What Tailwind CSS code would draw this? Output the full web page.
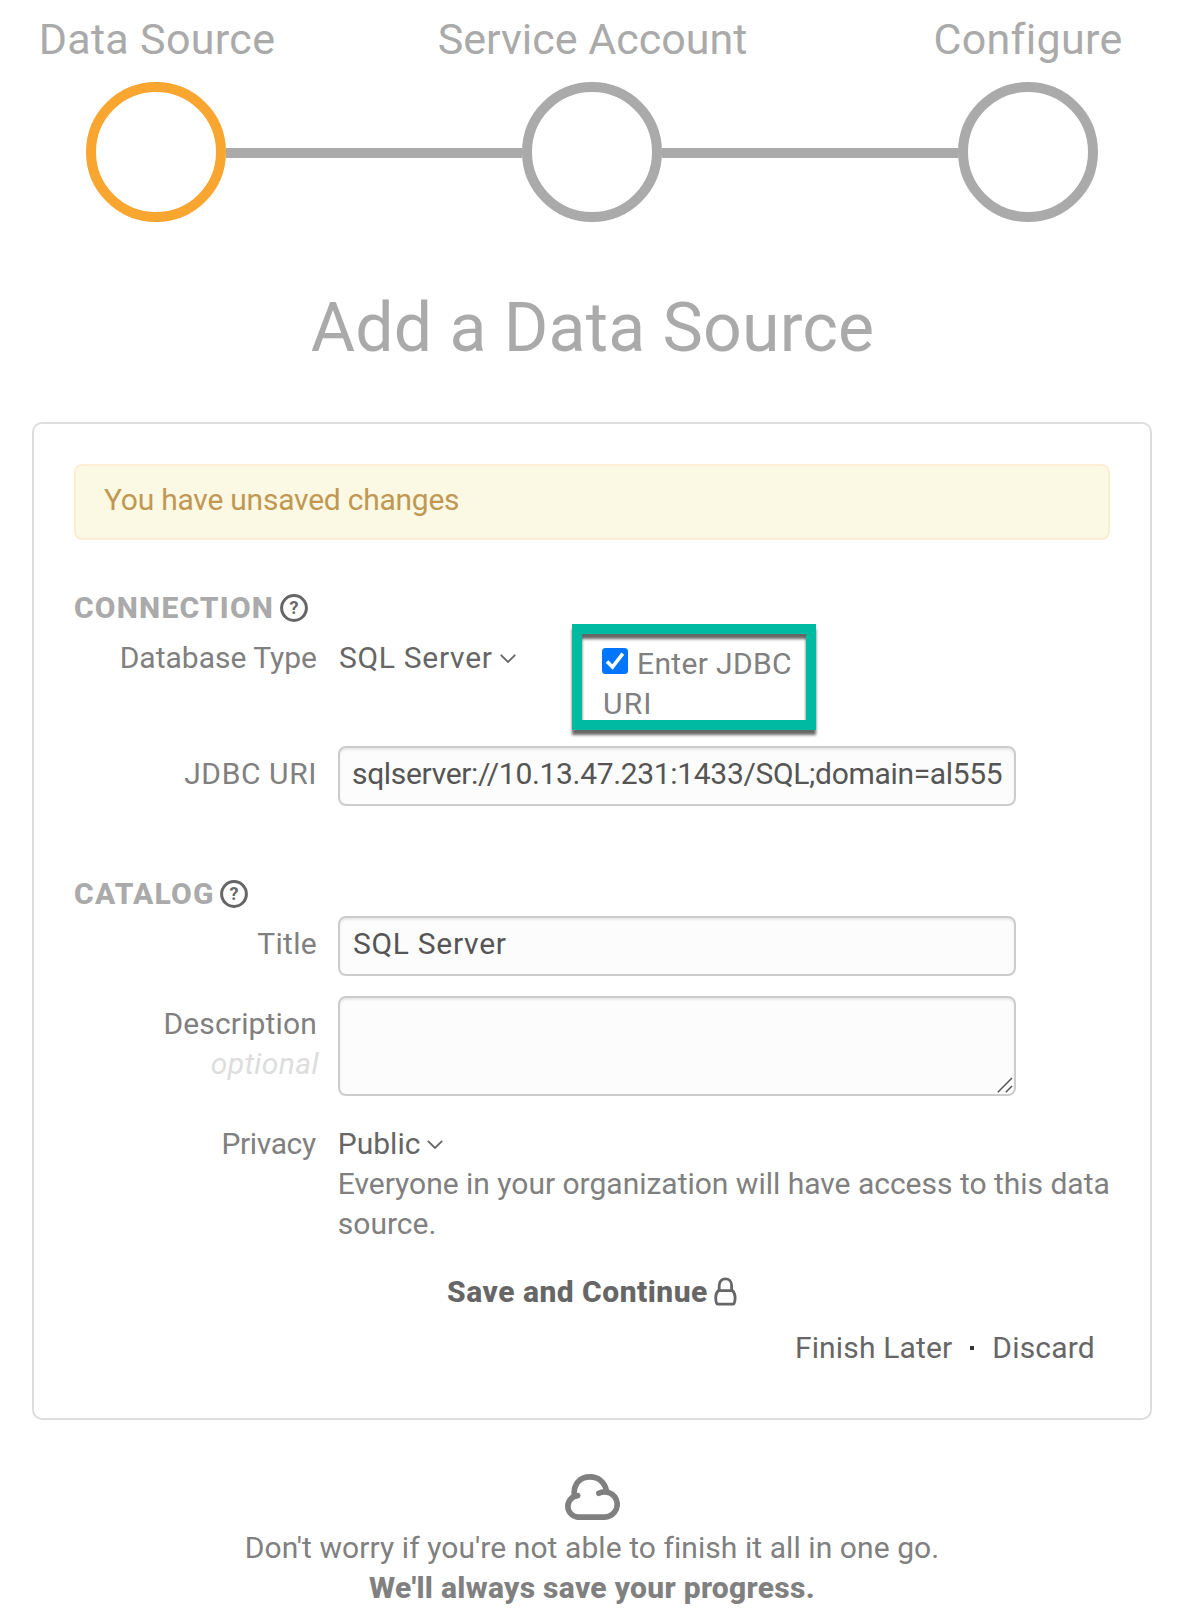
<!DOCTYPE html>
<html lang="en">
<head>
<meta charset="utf-8">
<title>Add a Data Source</title>
<script src="https://cdn.jsdelivr.net/npm/@tailwindcss/browser@4"></script>
</head>
<body class="bg-white font-['Roboto',sans-serif] text-[30px] leading-[40px] text-[#808080]">
<div class="flex h-[1616px] w-[1178px] flex-col overflow-hidden">

  <!-- Wizard steps -->
  <header class="flex flex-col pt-[9px] text-[#aaa]">
    <div class="flex justify-between pl-[7px] text-[43px] leading-[60px] whitespace-nowrap">
      <div class="flex w-[300px] justify-center tracking-[0.34px]">Data Source</div>
      <div class="flex w-[300px] justify-center">Service Account</div>
      <div class="flex w-[300px] justify-center tracking-[0.3px]">Configure</div>
    </div>
    <div class="mt-[13px] flex items-center pr-[80px] pl-[86px]">
      <div class="size-[140px] rounded-full border-[10px] border-[#f9a630]"></div>
      <div class="mt-[2px] h-[10px] flex-1 bg-[#aaa]"></div>
      <div class="size-[140px] rounded-full border-[10px] border-[#aaa]"></div>
      <div class="mt-[2px] h-[10px] flex-1 bg-[#aaa]"></div>
      <div class="size-[140px] rounded-full border-[10px] border-[#aaa]"></div>
    </div>
  </header>

  <h1 class="mt-[56px] pl-[7px] text-center text-[68px] leading-[100px] tracking-[0.2px] text-[#aaa]">Add a Data Source</h1>

  <main class="mt-[44px] mr-[26px] ml-[32px] flex flex-col rounded-[10px] border-2 border-[#ddd] px-[40px] pt-[40px] pb-[50px]">
    <div class="h-[76px] rounded-[8px] border-2 border-[#fbeed5] bg-[#fbf8e3] pt-[14px] pl-[28px] tracking-[-0.24px] text-[#c09853]">You have unsaved changes</div>

    <h2 class="mt-[48px] flex items-center gap-[6px] font-extrabold text-[#aaa]">
      <span class="tracking-[1.2px]">CONNECTION</span>
      <svg class="mt-[-1px] size-[28px]" viewBox="0 0 28 28"><circle cx="14" cy="14" r="12.4" fill="none" stroke="#666" stroke-width="3"/><text x="14" y="20.3" text-anchor="middle" font-size="18" font-weight="700" fill="#666">?</text></svg>
    </h2>

    <div class="relative mt-[10px] flex h-[98px]">
      <label class="w-[243px] text-right">Database Type</label>
      <div class="ml-[21px] flex w-[264px] items-start gap-[7px] pl-px text-[#666]">
        <span class="tracking-[0.7px]">SQL Server</span>
        <svg class="mt-[16px] h-[9px] w-[16px]" viewBox="0 0 16 9" fill="none" stroke="#666" stroke-width="1.8"><path d="M.8 .8 8 8 15.2 .8"/></svg>
      </div>
      <div class="w-[210px] pt-[6px]">
        <div class="flex items-start gap-[9px] whitespace-nowrap">
          <svg class="mt-[4px] size-[26px] shrink-0" viewBox="0 0 26 26"><rect width="26" height="26" rx="3.5" fill="#0075ff"/><path d="M5 13.5 10.5 19 20.8 5.6" fill="none" stroke="#fff" stroke-width="3.6"/></svg>
          <span class="tracking-[0.35px]">Enter JDBC</span>
        </div>
        <div class="pl-px tracking-[1.2px]">URI</div>
      </div>
      <div class="absolute top-[-14px] left-[498px] h-[106px] w-[244px] border-[10px] border-[#00bba1] drop-shadow-[0_5px_1.5px_rgba(0,0,0,0.6)]"></div>
    </div>

    <div class="mt-[10px] flex">
      <label class="w-[243px] pt-[8px] text-right tracking-[0.6px]">JDBC URI</label>
      <div class="ml-[21px] h-[60px] w-[678px] rounded-[8px] border-2 border-[#ccc] bg-[#fcfcfc] px-[12px] pt-[6px] text-[#555] shadow-[inset_0_2px_2px_rgba(0,0,0,0.075)]">
        <div class="overflow-hidden tracking-[-0.33px] whitespace-nowrap">sqlserver://10.13.47.231:1433/SQL;domain=al555</div>
      </div>
    </div>

    <h2 class="mt-[68px] flex items-center gap-[5px] font-extrabold text-[#aaa]">
      <span class="tracking-[1.25px]">CATALOG</span>
      <svg class="mt-[-1px] size-[28px]" viewBox="0 0 28 28"><circle cx="14" cy="14" r="12.4" fill="none" stroke="#666" stroke-width="3"/><text x="14" y="20.3" text-anchor="middle" font-size="18" font-weight="700" fill="#666">?</text></svg>
    </h2>

    <div class="mt-[2px] flex">
      <label class="w-[243px] pt-[8px] text-right tracking-[0.3px]">Title</label>
      <div class="ml-[21px] h-[60px] w-[678px] rounded-[8px] border-2 border-[#ccc] bg-[#fcfcfc] px-[13px] pt-[6px] tracking-[0.7px] text-[#555] shadow-[inset_0_2px_2px_rgba(0,0,0,0.075)]">SQL Server</div>
    </div>

    <div class="mt-[20px] flex">
      <label class="w-[243px] pt-[8px] text-right tracking-[0.15px]">Description<br><em class="mr-[-2px] tracking-[0.4px] text-[#ddd]">optional</em></label>
      <div class="ml-[21px] flex h-[100px] w-[678px] items-end justify-end rounded-[8px] border-2 border-[#ccc] bg-[#fcfcfc] pr-px pb-px shadow-[inset_0_2px_2px_rgba(0,0,0,0.075)]">
        <svg class="size-[16px]" viewBox="0 0 16 16" fill="none" stroke="#555" stroke-width="1.5"><path d="M.8 15.2 15 1M8.8 15.2 15 9"/></svg>
      </div>
    </div>

    <div class="mt-[28px] flex">
      <label class="w-[243px] text-right tracking-[-0.36px]">Privacy</label>
      <div class="ml-[22px] w-[776px]">
        <div class="flex items-start gap-[7px] text-[#666]">
          <span>Public</span>
          <svg class="mt-[16px] h-[9px] w-[16px]" viewBox="0 0 16 9" fill="none" stroke="#666" stroke-width="1.8"><path d="M.8 .8 8 8 15.2 .8"/></svg>
        </div>
        <p class="tracking-[-0.01px]">Everyone in your organization will have access to this data<br>source.</p>
      </div>
    </div>

    <div class="mt-[28px] flex items-start justify-center gap-[6px] font-extrabold text-[#666]">
      <span class="tracking-[0.5px]">Save and Continue</span>
      <svg class="mt-[5px] h-[29px] w-[23px]" viewBox="0 0 23 29" fill="none" stroke="#666" stroke-width="2.8"><path d="M5.2 14V8.6C5.2 4.6 7.8 1.9 11.4 1.9S17.6 4.6 17.6 8.6V14"/><path d="M4.4 13.6H18.4C20.4 15.4 21.1 17.6 21.1 20.4 21.1 23 20.8 25 20.2 26.2 19.9 26.9 19.4 27.2 18.7 27.2H4.1C3.4 27.2 2.9 26.9 2.6 26.2 2 25 1.7 23 1.7 20.4 1.7 17.6 2.4 15.4 4.4 13.6Z"/></svg>
    </div>

    <div class="mt-[16px] flex items-center justify-end pr-[15px] text-[#666]">
      <span class="tracking-[0.15px]">Finish Later</span>
      <span class="mr-[18px] ml-[18px] size-[4px] bg-[#333]"></span>
      <span class="tracking-[0.2px]">Discard</span>
    </div>
  </main>

  <footer class="mt-[54px] flex flex-col items-center pl-[6px] whitespace-nowrap">
    <svg class="h-[46px] w-[56px]" viewBox="0 0 56 46" fill="none" stroke="#808080" stroke-width="5.6" stroke-linecap="round" stroke-linejoin="round"><path d="M13.8 21.6A10.8 10.8 0 0 0 13.5 43.1H40.5A12.6 12.6 0 1 0 34.8 19.3"/><path d="M10.2 21.5C9.3 10 16 2.9 26 2.9 34.8 2.9 41 8.6 42.5 17" stroke-linecap="butt"/></svg>
    <p class="mt-[8px] tracking-[0.07px]">Don't worry if you're not able to finish it all in one go.</p>
    <p class="font-extrabold tracking-[0.3px]">We'll always save your progress.</p>
  </footer>
</div>
</body>
</html>
